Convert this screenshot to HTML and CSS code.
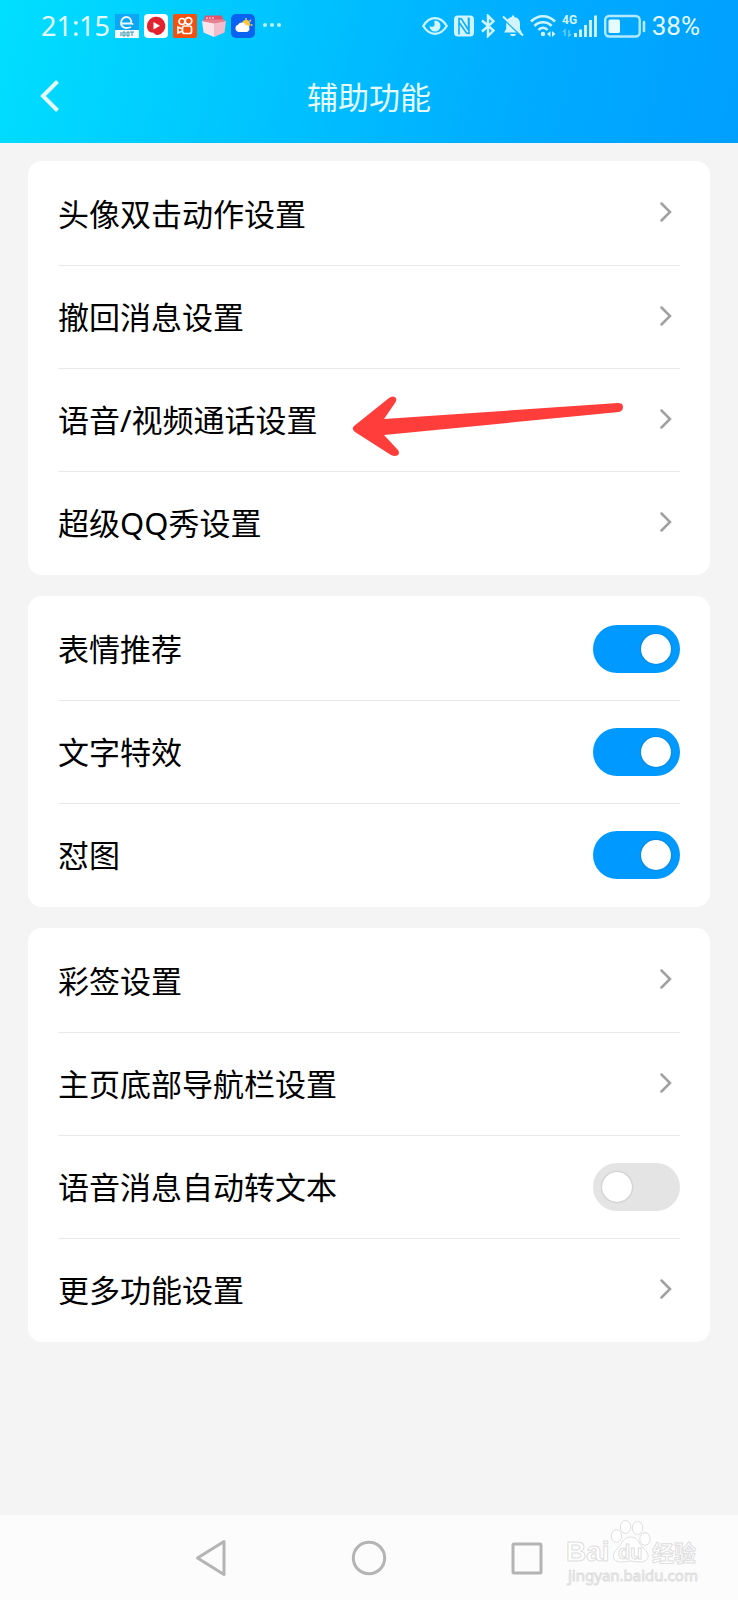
FILE: index.html
```html
<!DOCTYPE html>
<html lang="zh-CN">
<head>
    <meta charset="UTF-8">
    <meta name="viewport" content="width=device-width, initial-scale=1.0">
    <title>辅助功能</title>
    <link rel="stylesheet" href="styles.css">
</head>
<body>
    <svg width="0" height="0" class="defs">
        <symbol id="chevron" viewBox="0 0 12 20">
            <path d="M1.5 1.5 L10 10 L1.5 18.5" fill="none" stroke="#a0a0a0" stroke-width="2.5" stroke-linecap="round"/>
        </symbol>
    </svg>

    <header class="header">
        <div class="status-bar">
            <div class="status-left">
                <span class="time">21:15</span>
                <svg width="24" height="24" viewBox="0 0 24 24">
                    <rect width="24" height="17" fill="#0fa5f5"/>
                    <path d="M7 9.5 H16 C17 5 14 3 11.5 3 C8 3 6 6 6 9 C6 13 10 15.5 16 13" fill="none" stroke="#e6faff" stroke-width="1.8"/>
                    <circle cx="17.5" cy="10" r="1" fill="#e6faff"/>
                    <rect y="16" width="24" height="8" fill="#f2fbff"/>
                    <path d="M6 18 V22 M8 18 H10 V22 H8 Z M12 18 H14 V22 H12 Z M15 18 H19 M17 18 V22" fill="none" stroke="#3a8fa8" stroke-width="1"/>
                </svg>
                <svg width="24" height="24" viewBox="0 0 24 24">
                    <rect width="24" height="24" rx="4" fill="#fff"/>
                    <path d="M3 12 A9.2 9.2 0 1 1 14 21 C11 21.5 11 19 8.5 18.5 C5 18.5 3 16 3 12 Z" fill="#e3222f"/>
                    <path d="M9.5 8 L16 11.7 L9.5 15.5 Z" fill="#fff"/>
                </svg>
                <svg width="24" height="24" viewBox="0 0 24 24">
                    <rect width="24" height="24" rx="2" fill="#f4500f"/>
                    <g fill="none" stroke="#fff" stroke-width="1.7">
                        <circle cx="9" cy="7.5" r="3"/>
                        <circle cx="15.5" cy="7" r="3.3"/>
                        <rect x="9.5" y="12" width="9" height="7.5" rx="2"/>
                        <path d="M9.5 15 L5 13 V19 L9.5 17"/>
                    </g>
                </svg>
                <svg width="24" height="24" viewBox="0 0 24 24">
                    <path d="M3 1.5 H20 L22 8 H1 Z" fill="#e5536a"/>
                    <path d="M4 4 H13" stroke="#fbd" stroke-width="1.5" stroke-dasharray="2 1"/>
                    <path d="M0 7 L12 9 V23 L1.5 18.5 Z" fill="#fbe3ea"/>
                    <path d="M24 7 L12 9 V23 L22.5 18.5 Z" fill="#f3bccb"/>
                    <path d="M0 7 L3 5.5 H21 L24 7 L12 9.5 Z" fill="#e9808f"/>
                </svg>
                <svg width="24" height="24" viewBox="0 0 24 24">
                    <rect width="24" height="24" rx="5" fill="#0a62f0"/>
                    <path d="M15 4 V6 M20 6 L18.5 7.5 M21.5 11 H19.5" stroke="#ffd460" stroke-width="1.3"/>
                    <circle cx="15" cy="10" r="4" fill="#ffc83c"/>
                    <path d="M7.5 18 A3.8 3.8 0 0 1 7 10.7 A4.5 4.5 0 0 1 15 11 A3.6 3.6 0 0 1 16 18 Z" fill="#fff"/>
                </svg>
                <svg width="24" height="24" viewBox="0 0 24 24" fill="#b9f1ff">
                    <circle cx="5" cy="11" r="2"/><circle cx="12" cy="11" r="2"/><circle cx="19" cy="11" r="2"/>
                </svg>
            </div>
            <div class="status-right">
                <svg width="26" height="24" viewBox="0 0 26 24">
                    <path d="M1.2 12 C5 6 9 4.2 13 4.2 S21 6 24.8 12 C21 18 17 19.8 13 19.8 S5 18 1.2 12 Z" fill="none" stroke="#d2f4ff" stroke-width="2.2"/>
                    <path d="M13 6.5 A5.5 5.5 0 1 1 7.5 12 C8.5 13 12 13.5 12.5 11 C13 9 11.5 8 13 6.5 Z" fill="#d2f4ff"/>
                </svg>
                <svg width="20" height="24" viewBox="0 0 20 24">
                    <rect y="1.5" width="20" height="21" rx="4" fill="#d2f4ff"/>
                    <path d="M5 20.5 V4.5 L7.5 5 L14.5 16 V3.5 M15 4 V19.5 L12.5 19 L5.5 9" fill="none" stroke="#0bafff" stroke-width="1.6"/>
                </svg>
                <svg width="16" height="24" viewBox="0 0 16 24">
                    <path d="M2 6.5 L13.5 16.5 L8 22 V1.8 L13.5 7.3 L2 17.5" fill="none" stroke="#d2f4ff" stroke-width="2.4"/>
                </svg>
                <svg width="22" height="24" viewBox="0 0 22 24">
                    <path d="M11 0.8 L12.5 3 C17 4 18 7 18 10 V15 L20 18.5 H2 L4.2 15 V9 C4.5 6 6 3.8 9.5 3 Z M8 20 H14 C13.5 23 8.5 23 8 20 Z" fill="#d2f4ff"/>
                    <path d="M1.5 4.5 L19 21.5" stroke="#0bafff" stroke-width="2"/>
                    <path d="M1 2.5 L21 21.5" stroke="#d2f4ff" stroke-width="2"/>
                </svg>
                <svg width="26" height="24" viewBox="0 0 26 24">
                    <path d="M1 7.5 C8 0.5 18 0.5 25 7.5 M4.5 12 C9 7 17 7 21.5 12 M8.5 16 C11 13 15 13 17.5 16" fill="none" stroke="#d2f4ff" stroke-width="2.7"/>
                    <circle cx="13" cy="20" r="2.2" fill="#d2f4ff"/>
                    <path d="M20.5 17 V23 L17 20 Z M22 17 V23 L25.5 20 Z" fill="#d2f4ff"/>
                </svg>
                <svg width="36" height="24" viewBox="0 0 36 24">
                    <text x="0" y="10" class="network">4G</text>
                    <path d="M3 22 V16 L1 18 M7 16 V22 L9 20" fill="none" stroke="#63ccff" stroke-width="1.5"/>
                    <path d="M13.5 19 V23 M18.5 15.5 V23 M23.5 11 V23 M28.5 6 V23 M33.5 1.5 V23" stroke="#d2f4ff" stroke-width="2.8"/>
                </svg>
                <svg width="42" height="24" viewBox="0 0 42 24">
                    <rect x="1.2" y="2" width="34.5" height="20.5" rx="4" fill="none" stroke="#b4eaff" stroke-width="2.4"/>
                    <rect x="4.5" y="5.5" width="11.5" height="13.5" rx="1.5" fill="#e6fbff"/>
                    <path d="M40 8 V17" stroke="#b4eaff" stroke-width="2.6" stroke-linecap="round"/>
                </svg>
                <span class="battery">38%</span>
            </div>
        </div>
        <div class="title-bar">
            <button class="back" aria-label="返回">
                <svg width="20" height="34" viewBox="0 0 20 34">
                    <path d="M17.5 2.5 L3 17 L17.5 31.5" fill="none" stroke="#e6fbff" stroke-width="4"/>
                </svg>
            </button>
            <h1>辅助功能</h1>
        </div>
    </header>

    <main class="settings">
        <section class="card">
            <a class="row" href="#">头像双击动作设置<svg class="chevron"><use href="#chevron"/></svg></a>
            <a class="row" href="#">撤回消息设置<svg class="chevron"><use href="#chevron"/></svg></a>
            <a class="row" href="#">语音/视频通话设置<svg class="chevron"><use href="#chevron"/></svg>
                <svg class="arrow" width="272" height="60" viewBox="0 0 272 60">
                    <path d="M2 30 L37 2 Q41 -1 44 2 Q45 4 43 7 L32 23 L266 7 Q271 7 271 11 Q271 15 267 16 L32 39 L46 54 Q48 57 46 59 Q43 61 39 59 L3 36 Q-1 33 2 30 Z" fill="#ff3e3c"/>
                </svg>
            </a>
            <a class="row" href="#">超级QQ秀设置<svg class="chevron"><use href="#chevron"/></svg></a>
        </section>

        <section class="card">
            <label class="row">表情推荐<input type="checkbox" class="switch" checked></label>
            <label class="row">文字特效<input type="checkbox" class="switch" checked></label>
            <label class="row">怼图<input type="checkbox" class="switch" checked></label>
        </section>

        <section class="card">
            <a class="row" href="#">彩签设置<svg class="chevron"><use href="#chevron"/></svg></a>
            <a class="row" href="#">主页底部导航栏设置<svg class="chevron"><use href="#chevron"/></svg></a>
            <label class="row">语音消息自动转文本<input type="checkbox" class="switch"></label>
            <a class="row" href="#">更多功能设置<svg class="chevron"><use href="#chevron"/></svg></a>
        </section>
    </main>

    <nav class="nav-bar">
        <button aria-label="返回">
            <svg width="36" height="38" viewBox="0 0 36 38"><path d="M4.5 19 L31 2.5 V35.5 Z"/></svg>
        </button>
        <button aria-label="主页">
            <svg width="36" height="38" viewBox="0 0 36 38"><circle cx="18" cy="19" r="15.7"/></svg>
        </button>
        <button aria-label="最近任务">
            <svg width="36" height="38" viewBox="0 0 36 38"><rect x="4" y="5" width="28" height="29" rx="1"/></svg>
        </button>
        <svg class="watermark" width="144" height="70" viewBox="0 0 144 70">
            <text x="2" y="41" class="wm-latin">Bai</text>
            <ellipse cx="52.5" cy="16" rx="5.2" ry="6.3"/>
            <ellipse cx="61.5" cy="7" rx="5.2" ry="6.5"/>
            <ellipse cx="73.5" cy="8" rx="5.2" ry="6.5"/>
            <ellipse cx="81" cy="19" rx="5.2" ry="6.3"/>
            <path d="M66.5 17 C74 17 75 24 79 28 C88 35 84 42 76 42 C71 42 69 41 66.5 41 C64 41 62 42 57 42 C49 42 46 35 54 28 C58 24 59 17 66.5 17 Z"/>
            <text x="54" y="39" class="wm-du">du</text>
            <text x="88" y="41" class="wm-cjk">经验</text>
            <text x="4" y="61" class="wm-url">jingyan.baidu.com</text>
        </svg>
    </nav>
</body>
</html>
```
FILE: styles.css
```css
* {
    box-sizing: border-box;
}

body {
    margin: 0;
    min-height: 100vh;
    display: flex;
    flex-direction: column;
    background: #f4f4f4;
    color: #000;
    font-family: "Noto Sans", "Noto Sans CJK SC", sans-serif;
}

button {
    border: none;
    background: none;
    padding: 0;
    cursor: pointer;
}

svg {
    flex: none;
}

.defs {
    position: absolute;
}

/* header */
.header {
    padding-bottom: 3px;
    background: linear-gradient(105deg, #00dfff 0%, #00c5ff 35%, #00acff 70%, #009fff 100%);
    color: #e6fbff;
}

.status-bar {
    display: flex;
    justify-content: space-between;
    align-items: center;
    height: 52px;
    padding: 0 38px 0 41px;
}

.status-left,
.status-right {
    display: flex;
    align-items: center;
}

.status-left {
    gap: 5px;
}

.status-right {
    gap: 6px;
}

.time {
    font-size: 27px;
    line-height: 32px;
}

.battery {
    font-family: Roboto, sans-serif;
    font-size: 26px;
    line-height: 32px;
}

.network {
    font: bold 12px Roboto, sans-serif;
    fill: #d2f4ff;
}

.title-bar {
    display: grid;
    grid-template-columns: 60px 1fr 60px;
    align-items: center;
    height: 88px;
}

.back {
    display: flex;
    justify-content: flex-end;
}

.title-bar h1 {
    margin: 0;
    font-family: "Noto Sans CJK SC", sans-serif;
    font-size: 31px;
    font-weight: 400;
    line-height: 40px;
    text-align: center;
}

/* setting cards */
.settings {
    flex: 1;
    display: flex;
    flex-direction: column;
    gap: 21px;
    padding: 18px 28px;
}

.card {
    padding: 1px 30px;
    background: #fff;
    border-radius: 14px;
}

.row {
    position: relative;
    display: flex;
    justify-content: space-between;
    align-items: center;
    height: 103px;
    color: #000;
    font-size: 31px;
    line-height: 40px;
    text-decoration: none;
}

.row + .row {
    border-top: 1px solid #e9e9e9;
}

.chevron {
    width: 12px;
    height: 20px;
    margin: 0 8px 3px 0;
}

.arrow {
    position: absolute;
    top: 27px;
    left: 294px;
}

.switch {
    appearance: none;
    display: flex;
    align-items: center;
    width: 87px;
    height: 48px;
    margin: 0;
    padding: 0 9px;
    border-radius: 24px;
    background: #e4e4e4;
}

.switch::before {
    content: "";
    width: 30px;
    height: 30px;
    border-radius: 50%;
    background: #fff;
    box-shadow: 0 0 2px rgba(0, 0, 0, 0.3);
}

.switch:checked {
    justify-content: flex-end;
    background: #0099ff;
}

/* bottom navigation */
.nav-bar {
    position: relative;
    display: flex;
    justify-content: center;
    height: 85px;
    background: #fcfcfc;
}

.nav-bar button {
    display: flex;
    justify-content: center;
    align-items: center;
    width: 158px;
}

.nav-bar button svg {
    fill: none;
    stroke: #b4b4b4;
    stroke-width: 3;
    stroke-linejoin: round;
}

.watermark {
    position: absolute;
    right: 30px;
    top: 5px;
    fill: #fff;
    stroke: #dedede;
    stroke-width: 1;
}

.wm-latin {
    font: bold 28px "Liberation Sans", sans-serif;
}

.wm-du {
    font: bold 20px "Liberation Sans", sans-serif;
}

.wm-cjk {
    font: bold 22px "Noto Sans CJK SC", sans-serif;
}

.wm-url {
    font: 15px "Noto Sans", sans-serif;
}
```
